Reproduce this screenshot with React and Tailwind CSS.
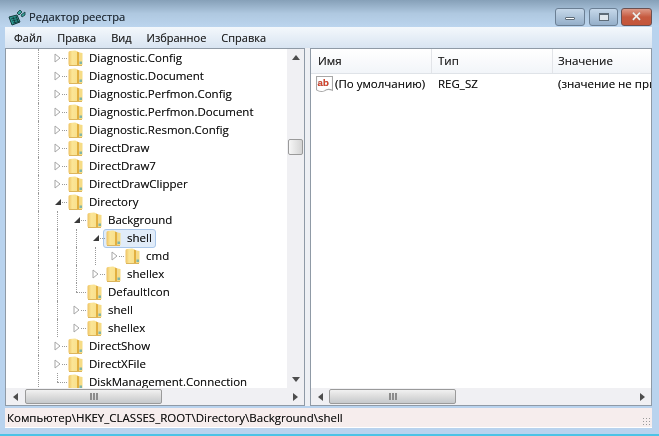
const font = { fontFamily: '"Open Sans", "Noto Sans", sans-serif' };

const rows = [
  { label: "Diagnostic.Config", lines: [0], at: 1, arrow: "open" },
  { label: "Diagnostic.Document", lines: [0], at: 1, arrow: "open" },
  { label: "Diagnostic.Perfmon.Config", lines: [0], at: 1, arrow: "open" },
  { label: "Diagnostic.Perfmon.Document", lines: [0], at: 1, arrow: "open" },
  { label: "Diagnostic.Resmon.Config", lines: [0], at: 1, arrow: "open" },
  { label: "DirectDraw", lines: [0], at: 1, arrow: "open" },
  { label: "DirectDraw7", lines: [0], at: 1, arrow: "open" },
  { label: "DirectDrawClipper", lines: [0], at: 1, arrow: "open" },
  { label: "Directory", lines: [0], at: 1, arrow: "filled" },
  { label: "Background", lines: [0, 1], at: 2, arrow: "filled" },
  { label: "shell", lines: [0, 1, 2], at: 3, arrow: "filled", selected: true },
  { label: "cmd", lines: [0, 1, 2, 3], at: 4, arrow: "open" },
  { label: "shellex", lines: [0, 1, 2], at: 3, arrow: "open" },
  { label: "DefaultIcon", lines: [0, 1, 2], at: 2, corner: true },
  { label: "shell", lines: [0, 1], at: 2, arrow: "open" },
  { label: "shellex", lines: [0, 1], at: 2, arrow: "open" },
  { label: "DirectShow", lines: [0, 1], at: 1, arrow: "open" },
  { label: "DirectXFile", lines: [0, 1], at: 1, arrow: "open" },
  { label: "DiskManagement.Connection", lines: [0, 1], at: 1, corner: true },
];

function Folder() {
  return (
    <svg width="15" height="17" viewBox="0 0 15 17" className="shrink-0">
      <defs>
        <linearGradient id="fold" x1="0" y1="0" x2="1" y2="0">
          <stop offset="0" stopColor="#eec262" />
          <stop offset="0.4" stopColor="#fbe596" />
          <stop offset="1" stopColor="#f9e08c" />
        </linearGradient>
      </defs>
      <path d="M0.5 2.5 Q0.5 1 2 1 L7 0.5 Q9 0.5 9.5 2 L9.5 15.5 L2 15.5 Q0.5 15.5 0.5 14 Z" fill="url(#fold)" />
      <path d="M9 1.5 L11.5 2.5 L11.5 15.5 L9 16 Z" fill="#e2b040" />
      <path d="M11.5 2.5 L14.5 3 L14.5 15 L11.5 15.5 Z" fill="#f6dc85" />
      <path d="M1 15.5 L14 15.5" stroke="#dcb55c" />
      <rect x="11.5" y="11.5" width="2.5" height="2.5" fill="#7fb5a8" />
    </svg>
  );
}

function Arrow({ type }) {
  if (type === "filled") {
    return (
      <svg width="8" height="8" viewBox="0 0 8 8" className="relative bg-white">
        <path d="M7 1 L7 7 L1 7 Z" fill="#3a3a3a" />
      </svg>
    );
  }
  return (
    <svg width="7" height="10" viewBox="0 0 7 10" className="relative bg-white">
      <path d="M1 1 L6 5 L1 9 Z" fill="#fff" stroke="#a6a6a6" />
    </svg>
  );
}

function TreeRow({ row }) {
  const cols = [0, 1, 2, 3, 4];
  return (
    <div className="flex h-[18px] shrink-0 items-center">
      {cols.slice(0, row.at + 1).map((c) => (
        <div key={c} className="relative flex h-full w-[19px] shrink-0 items-center justify-center">
          {row.lines.includes(c) && c !== row.at && (
            <div className="absolute left-[9px] top-0 h-full border-l border-dotted border-[#9a9a9a]" />
          )}
          {c === row.at && (
            <>
              <div className={`absolute left-[9px] top-0 h-[9px] border-l border-dotted border-[#9a9a9a] ${row.corner ? "" : "hidden"}`} />
              <div className="absolute left-[9px] top-[9px] h-0 w-[10px] border-t border-dotted border-[#9a9a9a]" />
              {row.arrow && <Arrow type={row.arrow} />}
            </>
          )}
        </div>
      ))}
      {row.selected ? (
        <div className="ml-[-2px] flex h-[19px] items-center rounded-[3px] border border-[#a9c7ea] bg-[#e1ecf9] pl-[2px]">
          <Folder />
          <span className="whitespace-nowrap pl-[6px] pr-[3px] text-[11.5px] leading-none text-[#111]">{row.label}</span>
        </div>
      ) : (
        <div className="flex h-[18px] items-center pl-[1px]">
          <Folder />
          <span className="whitespace-nowrap pl-[6px] text-[11.5px] leading-none text-[#111]">{row.label}</span>
        </div>
      )}
    </div>
  );
}

function ArrowGlyph({ dir }) {
  const d = {
    left: "M5 0 L5 8 L0 4 Z",
    right: "M0 0 L5 4 L0 8 Z",
    up: "M0 5 L8 5 L4 0 Z",
    down: "M0 0 L8 0 L4 5 Z",
  }[dir];
  const wide = dir === "up" || dir === "down";
  return (
    <svg width={wide ? 8 : 5} height={wide ? 5 : 8} viewBox={wide ? "0 0 8 5" : "0 0 5 8"}>
      <path d={d} fill="#4d4d4d" />
    </svg>
  );
}

function HScroll({ lead, thumb }) {
  return (
    <div className="flex h-[17px] shrink-0 items-center bg-[#f0f0f3]">
      <div className="flex w-[18px] shrink-0 items-center justify-center"><ArrowGlyph dir="left" /></div>
      <div className="shrink-0" style={{ width: lead }} />
      <div
        className="flex h-[15px] shrink-0 items-center justify-center gap-[1px] rounded-[2px] border border-[#9a9a9a] bg-gradient-to-b from-[#f1f1f1] via-[#dcdcdc] to-[#c6c9cc]"
        style={{ width: thumb }}
      >
        <span className="h-[7px] w-[2px] bg-[#8c8c8c]" />
        <span className="h-[7px] w-[2px] bg-[#8c8c8c]" />
        <span className="h-[7px] w-[2px] bg-[#8c8c8c]" />
      </div>
      <div className="flex-1" />
      <div className="flex w-[18px] shrink-0 items-center justify-center"><ArrowGlyph dir="right" /></div>
    </div>
  );
}

export default function App() {
  return (
    <div className="flex h-[436px] w-[659px] flex-col overflow-hidden bg-[#b9d3ee] blur-[0.4px] [text-shadow:0_0_0.6px_rgba(0,0,0,0.5)]" style={font}>
      {/* title bar */}
      <div className="flex h-[27px] shrink-0 items-center justify-between bg-gradient-to-b from-[#86a0b8] via-[#afc8e0] to-[#bcd5ee] pl-[8px] pr-[7px] pt-[6px]">
        <div className="flex items-center gap-[3px]">
          <svg width="18" height="18" viewBox="0 0 18 18">
            <path d="M1 9 L9 7 L12 14 L4 17 Z" fill="#2d9c95" stroke="#12393a" />
            <path d="M3 11 L9 9.5 M4 13 L10 11.5 M5 15 L11 13.5 M5 9 L7.5 16 M8 8 L10.5 15" stroke="#0f3335" strokeWidth="0.8" />
            <path d="M9 5 L12 2 L14 4 L11 7 Z M13 7 L17 4 L17 7 L14 9 Z" fill="#3aa69e" stroke="#12393a" strokeWidth="0.8" />
          </svg>
          <span className="text-[11.2px] leading-none text-[#1f2a35]">Редактор реестра</span>
        </div>
        <div className="flex">
          <div className="mr-[4px] flex h-[18px] w-[30px] items-center justify-center rounded-[3px] border border-[#6b7f94] bg-gradient-to-b from-[#c6d8ea] to-[#95afc9]">
            <span className="mt-[3px] h-[3px] w-[10px] rounded-[1px] border border-[#5d6b78] bg-white" />
          </div>
          <div className="mr-[3px] flex h-[18px] w-[29px] items-center justify-center rounded-[3px] border border-[#6b7f94] bg-gradient-to-b from-[#c6d8ea] to-[#95afc9]">
            <span className="h-[8px] w-[10px] border border-t-2 border-[#5d6b78] bg-[#dfe7ee]" />
          </div>
          <div className="flex h-[18px] w-[31px] items-center justify-center rounded-[3px] border border-[#6b5050] bg-gradient-to-b from-[#dd9a88] via-[#c65a3f] to-[#c4553a]">
            <span className="text-[13px] font-bold leading-none text-[#f4eeea]">✕</span>
          </div>
        </div>
      </div>

      {/* window body */}
      <div className="flex min-h-0 flex-1 flex-col pb-[6px] pl-[5px] pr-[7px]">
        <div className="flex h-[21px] shrink-0 items-center gap-[15px] bg-gradient-to-b from-[#f4f8fc] to-[#d8e4f1] pl-[9px] text-[11px] leading-none text-[#222]">
          <span>Файл</span>
          <span>Правка</span>
          <span>Вид</span>
          <span>Избранное</span>
          <span>Справка</span>
        </div>

        <div className="flex min-h-0 flex-1 bg-[#eef0f4]">
          {/* tree */}
          <div className="flex w-[300px] shrink-0 flex-col border border-[#8f9aa6] bg-white">
            <div className="flex min-h-0 flex-1">
              <div className="min-w-0 flex-1 overflow-hidden pl-[23px]">
                {rows.map((row, i) => (
                  <TreeRow key={i} row={row} />
                ))}
              </div>
              <div className="flex w-[17px] shrink-0 flex-col items-center bg-[#f0f0f3]">
                <div className="flex h-[17px] shrink-0 items-center justify-center"><ArrowGlyph dir="up" /></div>
                <div className="mt-[73px] h-[16px] w-[15px] rounded-[2px] border border-[#9a9a9a] bg-gradient-to-r from-[#f6f6f6] to-[#d4d4d4]" />
                <div className="flex-1" />
                <div className="flex h-[17px] shrink-0 items-center justify-center"><ArrowGlyph dir="down" /></div>
              </div>
            </div>
            <HScroll lead={1} thumb={137} />
          </div>

          <div className="w-[5px] shrink-0" />

          {/* values */}
          <div className="flex min-w-0 flex-1 flex-col border border-[#8f9aa6] bg-white">
            <div className="flex h-[25px] shrink-0 items-center border-b border-[#dfe3e8] bg-gradient-to-b from-white to-[#f2f5f9] text-[11.5px] leading-none text-[#222]">
              <div className="flex h-full w-[121px] items-center border-r border-[#e2e4e8] pl-[7px]">Имя</div>
              <div className="flex h-full w-[121px] items-center border-r border-[#e2e4e8] pl-[6px]">Тип</div>
              <div className="flex h-full flex-1 items-center overflow-hidden whitespace-nowrap pl-[5px]">Значение</div>
            </div>
            <div className="flex h-[20px] shrink-0 items-center text-[11.5px] leading-none text-[#111]">
              <div className="flex w-[121px] items-center pl-[5px]">
                <svg width="17" height="17" viewBox="0 0 16 16" className="shrink-0">
                  <path d="M0.5 0.5 H15.5 V13.5 Q11 11.5 8 14 Q4 15.5 0.5 13 Z" fill="#fff" stroke="#a8a8a8" />
                  <text x="1.5" y="9.5" fontSize="9" fontWeight="700" fill="#d8442c" fontFamily="Liberation Sans, sans-serif">ab</text>
                </svg>
                <span className="whitespace-nowrap pl-[2px]">(По умолчанию)</span>
              </div>
              <div className="w-[121px] pl-[6px]">REG_SZ</div>
              <div className="flex-1 overflow-hidden whitespace-nowrap pl-[5px]">(значение не присвоено)</div>
            </div>
            <div className="flex-1" />
            <HScroll lead={0} thumb={127} />
          </div>
        </div>

        {/* status bar */}
        <div className="relative mt-[2px] flex h-[20px] shrink-0 items-center border-b border-white bg-[#f6eded] pl-[2px] text-[11.5px] leading-none text-[#111]">
          <span>Компьютер\HKEY_CLASSES_ROOT\Directory\Background\shell</span>
          <span className="absolute bottom-[2px] right-[2px] h-[8px] w-[8px] bg-[radial-gradient(#9a9a9a_1px,transparent_1px)] bg-[length:3px_3px]" />
        </div>
      </div>
      <div className="h-[2px] shrink-0 bg-[#4cc3e6]" />
    </div>
  );
}
